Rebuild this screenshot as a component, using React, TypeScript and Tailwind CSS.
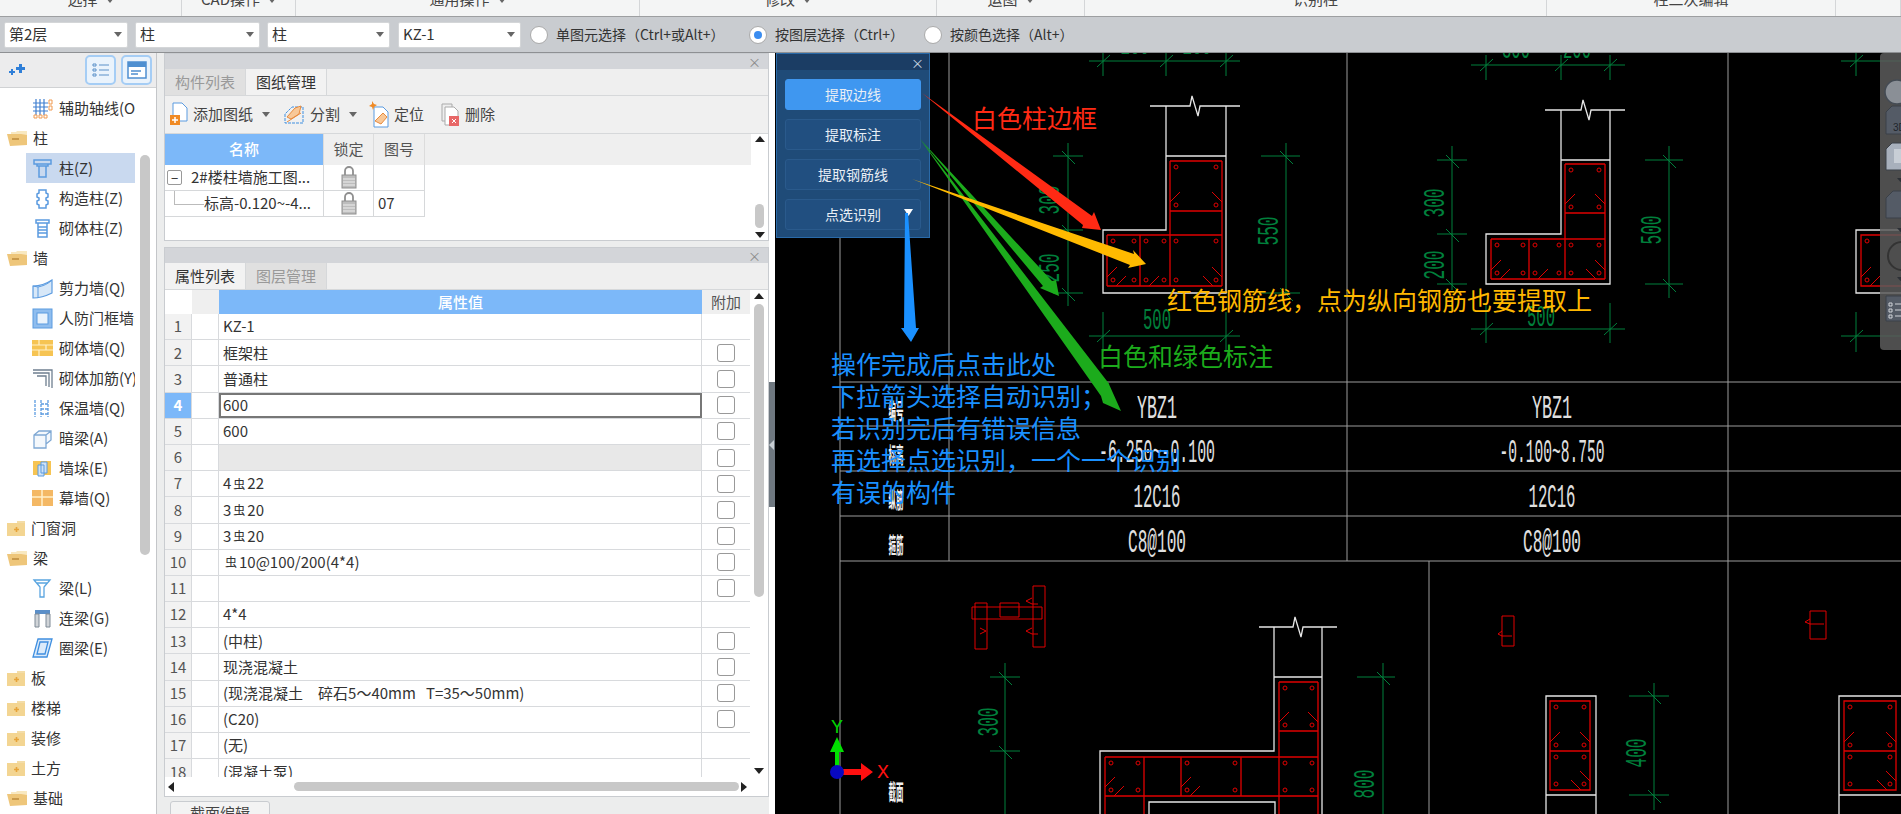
import type { ReactNode } from "react";

const RED = "#e00000";
const WHITE = "#e6e6e6";
const GREEN = "#00803c";
const GRID = "#9c9c9c";

function Caret({ className = "" }: { className?: string }) {
  return <span className={`inline-block w-0 h-0 border-x-[4px] border-x-transparent border-t-[5px] border-t-[#666] ${className}`} />;
}

/* top strips */
const ribbon = [
  { w: 182, label: "选择", caret: true },
  { w: 114, label: "CAD操作", caret: true },
  { w: 344, label: "通用操作", caret: true },
  { w: 297, label: "修改", caret: true },
  { w: 148, label: "运图", caret: true },
  { w: 462, label: "识别柱", caret: false },
  { w: 289, label: "柱二次编辑", caret: false },
  { w: 65, label: "", caret: false },
];

function Select({ value, w }: { value: string; w: string }) {
  return (
    <div className={`${w} h-[26px] bg-white border border-[#d4d6d8] rounded-[2px] flex items-center justify-between pl-[4px] pr-[5px] text-[15px] text-[#333]`}>
      <span>{value}</span>
      <Caret />
    </div>
  );
}

function Radio({ on, label, className }: { on?: boolean; label: string; className: string }) {
  return (
    <div className={`flex items-center ${className}`}>
      <span className="w-[18px] h-[18px] rounded-full bg-white border border-[#aaa] flex items-center justify-center shrink-0">
        {on && <span className="w-[8px] h-[8px] rounded-full bg-[#3b8df0]" />}
      </span>
      <span className="ml-[8px] text-[14px] text-[#333] whitespace-nowrap">{label}</span>
    </div>
  );
}

/* tree icons */
function TreeIcon({ name }: { name: string }) {
  const blue = "#5b9be0";
  const amber = "#f6c453";
  const orange = "#f0a030";
  const common = { width: 21, height: 21, viewBox: "0 0 21 21", fill: "none", className: "shrink-0" };
  switch (name) {
    case "grid":
      return (
        <svg {...common}>
          <path d="M1 5h15M1 9h15M1 13h15M4 1v16M8 1v16M12 1v16" stroke="#3f7fd0" strokeWidth="1.2" />
          <path d="M17 2h3v4h-3zM17 8h3v4h-3zM2 17h3v3H2zM7 17h3v3H7zM12 17h3v3h-3z" stroke="#f09a50" />
        </svg>
      );
    case "column":
      return (
        <svg {...common}>
          <path d="M2 2h17v4H2zM5 6h11v2H5zM7 8h7v11H7z" stroke={blue} strokeWidth="1.5" />
        </svg>
      );
    case "gz":
      return (
        <svg {...common}>
          <path d="M7 2h7v3l2 1v3l-2 1v2l2 1v3l-2 1v3H7v-3l-2-1v-3l2-1v-2L5 9V6l2-1z" stroke={blue} strokeWidth="1.5" />
        </svg>
      );
    case "brick":
      return (
        <svg {...common}>
          <path d="M4 2h13v3H4zM6 5h9v14H6zM6 9h9M6 12h9M6 15h9" stroke={blue} strokeWidth="1.5" />
        </svg>
      );
    case "shear":
      return (
        <svg {...common}>
          <path d="M1 8c6 0 13-2 19-6v13c-6 3-13 5-19 5z" fill="#d8e8f8" stroke={blue} strokeWidth="1.2" />
          <path d="M1 8l5 1v11M6 9c5-1 10-3 14-7" stroke={blue} />
        </svg>
      );
    case "door":
      return (
        <svg {...common}>
          <rect x="1" y="1" width="19" height="19" fill="#8fbdee" stroke={blue} />
          <rect x="5" y="5" width="11" height="11" fill="#eaf3fc" stroke={blue} />
        </svg>
      );
    case "wall":
      return (
        <svg {...common}>
          <rect x="0" y="2" width="21" height="16" fill={amber} />
          <path d="M0 7h21M0 12h21M7 2v5M14 7v5M7 12v6" stroke="#fff0c8" strokeWidth="1.2" />
        </svg>
      );
    case "rein":
      return (
        <svg {...common}>
          <path d="M1 2h19v18M1 5h16v14M5 8h9v10" stroke="#6f7f90" strokeWidth="1.3" />
        </svg>
      );
    case "insul":
      return (
        <svg {...common}>
          <path d="M3 2v17M9 2v17M16 2v17M9 6h7M9 11h7M9 16h7" stroke={blue} strokeWidth="1.3" strokeDasharray="3 1" />
        </svg>
      );
    case "hidden":
      return (
        <svg {...common}>
          <path d="M2 7l5-4h12v9l-5 4v4H2zM2 7h12v9M14 7l5-4" stroke="#7fa8d4" strokeWidth="1.3" fill="#f4f8fc" />
        </svg>
      );
    case "pier":
      return (
        <svg {...common}>
          <rect x="1" y="3" width="18" height="14" fill={amber} />
          <path d="M6 7h6v11H6zM9 4h6v11H9z" fill="#cfe2f6" stroke={blue} />
        </svg>
      );
    case "curtain":
      return (
        <svg {...common}>
          <rect x="0" y="2" width="21" height="16" fill={orange} opacity="0.75" />
          <path d="M0 9h21M10 2v16" stroke="#fff0c8" strokeWidth="1.5" />
        </svg>
      );
    case "beam":
      return (
        <svg {...common}>
          <path d="M2 2h16l-6 7v10H8V9zM8 9L2 2M12 9l6-7M5 5h10" stroke="#5aa5e0" strokeWidth="1.3" />
        </svg>
      );
    case "link":
      return (
        <svg {...common}>
          <path d="M3 2h15v4H3z" fill="#5b8fc8" />
          <path d="M3 6h4v13H3zM14 6h4v13h-4z" fill="#d0d4d8" stroke="#7f8a96" />
        </svg>
      );
    case "ring":
      return (
        <svg {...common}>
          <path d="M6 1h14l-5 18H1zM8 4h8l-3 12H5z" fill="#dcebfa" stroke="#3f8fe0" strokeWidth="1.3" />
        </svg>
      );
    default:
      return null;
  }
}

function Folder({ open }: { open?: boolean }) {
  if (open) {
    return (
      <svg width="21" height="17" viewBox="0 0 21 17" className="shrink-0">
        <path d="M4 2h5l1-1h10v12H4z" fill="#f8e8c0" />
        <path d="M0 4h14l6 1v10l-17 1z" fill="#eec67a" />
        <rect x="5" y="8" width="7" height="2" fill="#c99a4c" />
      </svg>
    );
  }
  return (
    <svg width="19" height="17" viewBox="0 0 19 17" className="shrink-0">
      <path d="M10 1h8v4h-8z" fill="#f3dca6" />
      <rect x="0" y="3" width="18" height="13" fill="#f3d592" />
      <path d="M7 9.500h5M9.500 7v5" stroke="#e6a33a" strokeWidth="1.600" />
    </svg>
  );
}

const tree: { label: string; icon?: string; folder?: "open" | "closed"; active?: boolean }[] = [
  { label: "辅助轴线(O", icon: "grid" },
  { label: "柱", folder: "open" },
  { label: "柱(Z)", icon: "column", active: true },
  { label: "构造柱(Z)", icon: "gz" },
  { label: "砌体柱(Z)", icon: "brick" },
  { label: "墙", folder: "open" },
  { label: "剪力墙(Q)", icon: "shear" },
  { label: "人防门框墙(", icon: "door" },
  { label: "砌体墙(Q)", icon: "wall" },
  { label: "砌体加筋(Y)", icon: "rein" },
  { label: "保温墙(Q)", icon: "insul" },
  { label: "暗梁(A)", icon: "hidden" },
  { label: "墙垛(E)", icon: "pier" },
  { label: "幕墙(Q)", icon: "curtain" },
  { label: "门窗洞", folder: "closed" },
  { label: "梁", folder: "open" },
  { label: "梁(L)", icon: "beam" },
  { label: "连梁(G)", icon: "link" },
  { label: "圈梁(E)", icon: "ring" },
  { label: "板", folder: "closed" },
  { label: "楼梯", folder: "closed" },
  { label: "装修", folder: "closed" },
  { label: "土方", folder: "closed" },
  { label: "基础", folder: "open" },
];

function LeftPanel() {
  return (
    <div className="w-[157px] shrink-0 bg-white border-r border-[#c4c6c9] flex flex-col">
      <div className="h-[35px] bg-[#ececed] border-b border-[#d0d2d4] flex items-center pl-[9px] pr-[4px]">
        <svg width="16" height="12" viewBox="0 0 16 12">
          <path d="M10 0h3v3h3v3h-3v3h-3V6H7V3h3zM2 5h2v2h2v2H4v2H2V9H0V7h2z" fill="#2f7fd8" />
        </svg>
        <button className="ml-auto w-[31px] h-[30px] rounded-[5px] border-2 border-[#a5cdf5] bg-[#eaf3fc] flex items-center justify-center">
          <svg width="18" height="16" viewBox="0 0 18 16" fill="none" stroke="#5a90c8">
            <path d="M1 2h3v2H1zM1 7h3v2H1zM1 12h3v2H1zM7 3h10M7 8h10M7 13h10" />
          </svg>
        </button>
        <button className="ml-[5px] w-[31px] h-[30px] rounded-[5px] border-2 border-[#a5cdf5] bg-[#eaf3fc] flex items-center justify-center">
          <svg width="20" height="18" viewBox="0 0 20 18">
            <rect x="1" y="1" width="18" height="16" fill="#fff" stroke="#4f8fd0" strokeWidth="1.500" />
            <rect x="1" y="1" width="18" height="5" fill="#4f8fd0" />
            <path d="M4 10h10M4 13h7" stroke="#4f8fd0" strokeWidth="1.300" />
          </svg>
        </button>
      </div>
      <div className="flex-1 flex overflow-hidden">
        <div className="w-[135px] shrink-0 pt-[5px]">
          {tree.map((row) =>
            row.folder ? (
              <div key={row.label} className="h-[30px] flex items-center pl-[7px] text-[15px] text-[#333]">
                <Folder open={row.folder === "open"} />
                <span className="ml-[5px] whitespace-nowrap">{row.label}</span>
              </div>
            ) : (
              <div
                key={row.label}
                className={`h-[30px] ml-[26px] flex items-center pl-[6px] text-[15px] text-[#333] overflow-hidden ${row.active ? "bg-[#c9d9ef]" : ""}`}
              >
                <TreeIcon name={row.icon ?? ""} />
                <span className="ml-[6px] whitespace-nowrap">{row.label}</span>
              </div>
            ),
          )}
        </div>
        <div className="ml-[5px] w-[10px] mt-[67px] h-[400px] bg-[#c8c8c8] rounded-full" />
      </div>
    </div>
  );
}

/* middle panels */
function PanelHead() {
  return (
    <div className="h-[15px] shrink-0 bg-[#d3d5d9] flex items-center justify-end pr-[7px] text-[13px] leading-none text-[#8a8a8a]">×</div>
  );
}

function Tabs({ items, active }: { items: string[]; active: number }) {
  return (
    <div className="h-[27px] shrink-0 bg-[#efefef] border-b border-[#d6d8da] flex">
      {items.map((t, i) => (
        <div
          key={t}
          className={`w-[81px] flex items-center justify-center text-[15px] border-r border-[#d6d8da] ${i === active ? "bg-[#f2f2f2] text-[#333]" : "bg-[#e0e0e0] text-[#999]"}`}
        >
          {t}
        </div>
      ))}
    </div>
  );
}

function Lock() {
  return (
    <svg width="16" height="23" viewBox="0 0 16 23">
      <path d="M4 9V5a4 4 0 0 1 8 0v4" fill="none" stroke="#8f8f8f" strokeWidth="1.800" />
      <rect x="1" y="9" width="14" height="13" fill="#bdbdbd" stroke="#8f8f8f" />
      <path d="M2 13h12M2 16h12M2 19h12" stroke="#eee" />
    </svg>
  );
}

function ToolIcon({ kind }: { kind: string }) {
  if (kind === "add")
    return (
      <svg width="18" height="25" viewBox="0 0 18 25">
        <path d="M3 1h9l5 5v13H3z" fill="#fff" stroke="#5b9be0" />
        <rect x="0" y="13" width="10" height="10" fill="#f08a24" />
        <path d="M2 18h6M5 15v6" stroke="#fff" strokeWidth="1.500" />
      </svg>
    );
  if (kind === "split")
    return (
      <svg width="22" height="25" viewBox="0 0 22 25" fill="none">
        <path d="M2 12v9h18V5H9z" stroke="#3f8fe0" strokeDasharray="3 1" />
        <path d="M4 15l8-9 6-2-2 8-8 5z" fill="#f8c898" stroke="#e88a3c" />
        <path d="M4 20l14-9" stroke="#e88a3c" />
      </svg>
    );
  if (kind === "locate")
    return (
      <svg width="20" height="27" viewBox="0 0 20 27" fill="none">
        <path d="M5 6h9l5 5v15H5z" fill="#fff" stroke="#5b9be0" />
        <path d="M3 0l2 3 3 1-3 2-1 3-1-3-3-1 3-2z" fill="#f08a24" />
        <path d="M6 20l8-8 4 4-6 7z" fill="#f8c898" stroke="#e88a3c" />
      </svg>
    );
  return (
    <svg width="19" height="24" viewBox="0 0 19 24" fill="none">
      <path d="M1 1h10v17H1z" fill="#eee" stroke="#aaa" />
      <path d="M4 4h9l4 4v14H4z" fill="#fff" stroke="#aaa" />
      <rect x="8" y="13" width="10" height="10" fill="#e86868" />
      <path d="M11 16l4 4M15 16l-4 4" stroke="#fff" />
    </svg>
  );
}

function Tool({ kind, label, caret, className }: { kind: string; label: string; caret?: boolean; className: string }) {
  return (
    <div className={`flex items-center text-[15px] text-[#444] ${className}`}>
      <ToolIcon kind={kind} />
      <span className="ml-[5px] whitespace-nowrap">{label}</span>
      {caret && <Caret className="ml-[9px]" />}
    </div>
  );
}

function Arrow({ dir }: { dir: "up" | "down" | "left" | "right" }) {
  const cls = {
    up: "border-x-[5px] border-x-transparent border-b-[6px] border-b-[#222]",
    down: "border-x-[5px] border-x-transparent border-t-[6px] border-t-[#222]",
    left: "border-y-[5px] border-y-transparent border-r-[6px] border-r-[#222]",
    right: "border-y-[5px] border-y-transparent border-l-[6px] border-l-[#222]",
  }[dir];
  return <span className={`block w-0 h-0 ${cls}`} />;
}

function DrawingPanel() {
  return (
    <div className="h-[188px] shrink-0 bg-white border border-[#c9ccd0] flex flex-col">
      <PanelHead />
      <Tabs items={["构件列表", "图纸管理"]} active={1} />
      <div className="h-[38px] shrink-0 bg-[#f0f0f0] border-b border-[#d6d8da] flex items-center pl-[5px]">
        <Tool kind="add" label="添加图纸" caret className="w-[113px]" />
        <Tool kind="split" label="分割" caret className="w-[86px]" />
        <Tool kind="locate" label="定位" className="w-[72px]" />
        <Tool kind="del" label="删除" className="" />
      </div>
      <div className="flex-1 flex min-h-0">
        <div className="flex-1 flex flex-col">
          <div className="h-[31px] bg-[#efefef] flex text-[15px] text-[#555] shrink-0">
            <div className="w-[158px] bg-[#7cb8f9] text-white font-medium flex items-center justify-center">名称</div>
            <div className="w-[51px] border-x border-[#dcdcdc] flex items-center justify-center">锁定</div>
            <div className="w-[51px] border-r border-[#dcdcdc] flex items-center justify-center">图号</div>
          </div>
          <div className="flex h-[26px] text-[15px] text-[#333]">
            <div className="w-[158px] border-b border-[#d6d8da] flex items-center pl-[2px] whitespace-nowrap overflow-hidden">
              <span className="w-[15px] h-[15px] border border-[#999] rounded-[2px] flex items-center justify-center leading-none text-[13px] shrink-0">−</span>
              <span className="ml-[9px]">2#楼柱墙施工图...</span>
            </div>
            <div className="w-[51px] border-x border-b border-[#d6d8da] flex items-center justify-center"><Lock /></div>
            <div className="w-[51px] border-r border-b border-[#d6d8da]" />
          </div>
          <div className="flex h-[26px] text-[15px] text-[#333]">
            <div className="w-[158px] border-b border-[#d6d8da] flex items-center pl-[9px] whitespace-nowrap overflow-hidden">
              <span className="w-[30px] h-[18px] -mt-[16px] border-l border-b border-[#bbb] shrink-0" />
              <span>标高-0.120~-4...</span>
            </div>
            <div className="w-[51px] border-x border-b border-[#d6d8da] flex items-center justify-center"><Lock /></div>
            <div className="w-[51px] border-r border-b border-[#d6d8da] flex items-center pl-[4px]">07</div>
          </div>
        </div>
        <div className="w-[17px] shrink-0 flex flex-col items-center justify-between py-[2px]">
          <Arrow dir="up" />
          <div className="flex-1" />
          <div className="w-[9px] h-[24px] bg-[#c8c8c8] rounded-full mb-[4px]" />
          <Arrow dir="down" />
        </div>
      </div>
    </div>
  );
}

function Rebar() {
  return <span className="text-[12px] align-[4px] mx-[2px]">虫</span>;
}

const props: { value?: ReactNode; check: boolean }[] = [
  { value: "KZ-1", check: false },
  { value: "框架柱", check: true },
  { value: "普通柱", check: true },
  { value: "600", check: true },
  { value: "600", check: true },
  { check: true },
  { value: <>4<Rebar />22</>, check: true },
  { value: <>3<Rebar />20</>, check: true },
  { value: <>3<Rebar />20</>, check: true },
  { value: <><Rebar />10@100/200(4*4)</>, check: true },
  { check: true },
  { value: "4*4", check: false },
  { value: "(中柱)", check: true },
  { value: "现浇混凝土", check: true },
  { value: "(现浇混凝土　碎石5～40mm   T=35～50mm)", check: true },
  { value: "(C20)", check: true },
  { value: "(无)", check: false },
  { value: "(混凝土泵)", check: false },
];

function PropertyPanel() {
  return (
    <div className="h-[550px] shrink-0 bg-white border border-[#c9ccd0] flex flex-col">
      <PanelHead />
      <Tabs items={["属性列表", "图层管理"]} active={0} />
      <div className="flex-1 flex min-h-0">
        <div className="flex-1 flex flex-col overflow-hidden text-[15px] text-[#333]">
          <div className="h-[24px] shrink-0 flex">
            <div className="w-[27px]" />
            <div className="w-[27px] bg-[#efefef]" />
            <div className="w-[483px] bg-[#7cb8f9] text-white font-medium flex items-center justify-center">属性值</div>
            <div className="flex-1 bg-[#efefef] text-[#555] flex items-center justify-center">附加</div>
          </div>
          {props.map((row, i) => {
            const num = i + 1;
            const selected = num === 4;
            return (
              <div key={num} className="h-[26.2px] shrink-0 flex border-b border-[#d8dadd]">
                <div className={`w-[27px] flex items-center justify-center border-r border-[#d8dadd] ${selected ? "bg-[#7cb8f9] text-white font-bold" : "bg-[#f2f2f2] text-[#555]"}`}>
                  {num}
                </div>
                <div className="w-[27px] border-r border-[#d8dadd]" />
                <div className={`w-[483px] flex items-center whitespace-pre ${selected ? "border-2 border-[#777] pl-[2px]" : "border-r border-[#d8dadd] pl-[4px]"} ${num === 6 ? "bg-[#e8e8e8]" : ""}`}>
                  {row.value}
                </div>
                <div className="flex-1 flex items-center justify-center">
                  {row.check && <span className="w-[18px] h-[18px] border border-[#999] rounded-[3px] bg-white" />}
                </div>
              </div>
            );
          })}
        </div>
        <div className="w-[18px] shrink-0 flex flex-col items-center py-[3px]">
          <Arrow dir="up" />
          <div className="w-[10px] h-[293px] mt-[5px] bg-[#c8c8c8] rounded-full" />
          <div className="flex-1" />
          <Arrow dir="down" />
        </div>
      </div>
      <div className="h-[19px] shrink-0 flex items-center px-[3px]">
        <Arrow dir="left" />
        <div className="ml-[120px] w-[445px] h-[9px] bg-[#c8c8c8] rounded-full" />
        <div className="flex-1" />
        <Arrow dir="right" />
        <div className="w-[18px]" />
      </div>
    </div>
  );
}

/* CAD drawing */
function DimV({ x, y1, y2, ticks, l = 15, r = 15 }: { x: number; y1: number; y2: number; ticks: number[]; l?: number; r?: number }) {
  return (
    <g stroke={GREEN}>
      <path d={`M${x} ${y1}V${y2}`} />
      {ticks.map((t) => (
        <path key={t} d={`M${x - l} ${t}H${x + r}M${x - 6} ${t - 5}L${x + 7} ${t + 8}`} />
      ))}
    </g>
  );
}

function DimH({ y, x1, x2, ticks, up = 10, down = 15 }: { y: number; x1: number; x2: number; ticks: number[]; up?: number; down?: number }) {
  return (
    <g stroke={GREEN}>
      <path d={`M${x1} ${y}H${x2}`} />
      {ticks.map((t) => (
        <path key={t} d={`M${t} ${y - up}V${y + down}M${t - 6} ${y + 6}L${t + 7} ${y - 6}`} />
      ))}
    </g>
  );
}

function Num({ x, y, t, len = 29, size = 30, rot = true }: { x: number; y: number; t: string; len?: number; size?: number; rot?: boolean }) {
  return (
    <text
      x={x}
      y={y}
      fill={GREEN}
      fontFamily="Liberation Mono, monospace"
      fontSize={size}
      textAnchor="middle"
      dominantBaseline="central"
      textLength={len}
      lengthAdjust="spacingAndGlyphs"
      transform={rot ? `rotate(-90 ${x} ${y})` : undefined}
    >
      {t}
    </text>
  );
}

function Cell({ t, x, y, len }: { t: string; x: number; y: number; len: number }) {
  return (
    <text
      x={x}
      y={y}
      fill="#e0e0e0"
      fontFamily="Liberation Mono, monospace"
      fontSize={33}
      textAnchor="middle"
      dominantBaseline="central"
      textLength={len}
      lengthAdjust="spacingAndGlyphs"
    >
      {t}
    </text>
  );
}

function Blob({ t, y }: { t: string; y: number }) {
  return (
    <text
      x={896}
      y={y}
      fill="#f0f0f0"
      fontFamily="Noto Sans CJK SC, sans-serif"
      fontWeight={700}
      fontSize={22}
      textAnchor="middle"
      dominantBaseline="central"
      textLength={15}
      lengthAdjust="spacingAndGlyphs"
    >
      {t}
    </text>
  );
}

/* hooks: a = left upper, b = left lower, c = right upper, d = right lower */
function Stirrup({ x1, y1, x2, y2, hooks = "" }: { x1: number; y1: number; x2: number; y2: number; hooks?: string }) {
  let d = "";
  if (hooks.includes("a")) d += `M${x1} ${y2 - 9}L${x1 + 10} ${y2 - 19}`;
  if (hooks.includes("b")) d += `M${x1 + 9} ${y2}L${x1 + 19} ${y2 - 10}`;
  if (hooks.includes("c")) d += `M${x2} ${y2 - 9}L${x2 - 10} ${y2 - 19}`;
  if (hooks.includes("d")) d += `M${x2 - 9} ${y2}L${x2 - 19} ${y2 - 10}`;
  return (
    <g stroke={RED} fill="none">
      <circle cx={x1 + 6} cy={y1 + 6} r={2} />
      <circle cx={x2 - 6} cy={y1 + 6} r={2} />
      <circle cx={x1 + 6} cy={y2 - 6} r={2} />
      <circle cx={x2 - 6} cy={y2 - 6} r={2} />
      {d && <path d={d} />}
    </g>
  );
}

function Zig({ x1, x2, y, z }: { x1: number; x2: number; y: number; z: number }) {
  return <path d={`M${x1} ${y}H${z}L${z + 2} ${y - 10}L${z + 8} ${y + 10}L${z + 10} ${y}H${x2}`} fill="none" stroke={WHITE} strokeWidth="1.300" />;
}

function Drawing() {
  return (
    <svg className="absolute inset-0" width="1126" height="761" viewBox="775 53 1126 761">
      {/* table lines */}
      <path d="M840 238V814M949 53V561M1347 53V561M1728 53V814M1429 561V814M840 382H1901M840 426H1901M840 471H1901M840 516H1901M840 561H1901" stroke={GRID} strokeWidth="1" fill="none" />
      <Blob t="编号" y={409} />
      <Blob t="标高" y={453} />
      <Blob t="纵筋" y={498} />
      <Blob t="箍筋" y={543} />
      <Blob t="截面" y={790} />
      <Cell t="YBZ1" x={1157} y={409} len={40} />
      <Cell t="-6.250~-0.100" x={1157} y={453} len={116} />
      <Cell t="12C16" x={1157} y={498} len={47} />
      <Cell t="C8@100" x={1157} y={543} len={58} />
      <Cell t="YBZ1" x={1552} y={409} len={40} />
      <Cell t="-0.100~8.750" x={1552} y={453} len={105} />
      <Cell t="12C16" x={1552} y={498} len={47} />
      <Cell t="C8@100" x={1552} y={543} len={58} />

      {/* first column */}
      <DimH y={61} x1={1089} x2={1240} ticks={[1103, 1166, 1226]} />
      <Num x={1135} y={46} t="250" rot={false} />
      <Num x={1197} y={46} t="250" rot={false} />
      <DimV x={1068} y1={143} y2={306} ticks={[156, 230, 293]} />
      <Num x={1051} y={200} t="300" />
      <Num x={1051} y={268} t="250" />
      <DimV x={1286} y1={143} y2={293} ticks={[156, 293]} l={25} r={14} />
      <Num x={1270} y={231} t="550" />
      <DimH y={336} x1={1089} x2={1240} ticks={[1103, 1226]} up={24} down={16} />
      <Num x={1157} y={321} t="500" len={28} rot={false} />
      <Zig x1={1150} x2={1240} y={106} z={1190} />
      <path d="M1166 106V230H1103V293H1226V106M1166 156H1226" fill="none" stroke={WHITE} strokeWidth="1.300" />
      <path d="M1170 161V286M1222 161V286M1170 161H1222M1170 211H1222M1107 235H1222M1107 286H1222M1107 235V286M1140 235V286" fill="none" stroke={RED} strokeWidth="1.300" />
      <Stirrup x1={1170} y1={161} x2={1222} y2={211} hooks="ac" />
      <Stirrup x1={1107} y1={235} x2={1140} y2={286} hooks="ab" />
      <Stirrup x1={1140} y1={235} x2={1170} y2={286} hooks="b" />
      <Stirrup x1={1170} y1={235} x2={1222} y2={286} hooks="cd" />

      {/* second column */}
      <DimH y={65} x1={1471} x2={1625} ticks={[1486, 1561, 1610]} />
      <Num x={1516} y={50} t="300" len={28} rot={false} />
      <Num x={1577} y={50} t="200" len={28} rot={false} />
      <DimV x={1452} y1={146} y2={290} ticks={[160, 234, 284]} />
      <Num x={1436} y={203} t="300" />
      <Num x={1436} y={265} t="200" />
      <DimV x={1669} y1={146} y2={298} ticks={[160, 284]} l={24} r={14} />
      <Num x={1653} y={230} t="500" />
      <DimH y={329} x1={1471} x2={1625} ticks={[1486, 1610]} up={26} down={14} />
      <Num x={1541} y={318} t="500" len={28} rot={false} />
      <Zig x1={1545} x2={1625} y={110} z={1581} />
      <path d="M1561 110V234H1486V284H1610V110M1561 160H1610" fill="none" stroke={WHITE} strokeWidth="1.300" />
      <path d="M1565 164V279M1605 164V279M1565 164H1605M1565 213H1605M1491 239H1605M1491 279H1605M1491 239V279M1529 239V279" fill="none" stroke={RED} strokeWidth="1.300" />
      <Stirrup x1={1565} y1={164} x2={1605} y2={213} hooks="ac" />
      <Stirrup x1={1491} y1={239} x2={1529} y2={279} hooks="ab" />
      <Stirrup x1={1529} y1={239} x2={1565} y2={279} hooks="b" />
      <Stirrup x1={1565} y1={239} x2={1605} y2={279} hooks="cd" />

      {/* cut off column on the right */}
      <DimH y={61} x1={1841} x2={1901} ticks={[1856]} />
      <DimH y={336} x1={1841} x2={1901} ticks={[1856]} up={24} down={16} />
      <path d="M1901 230H1856V293H1901" fill="none" stroke={WHITE} strokeWidth="1.300" />
      <path d="M1901 235H1861V286H1901" fill="none" stroke={RED} strokeWidth="1.300" />
      <Stirrup x1={1861} y1={235} x2={1920} y2={286} hooks="ab" />

      {/* small red details */}
      <path d="M1033 586h12v61h-12zM975 603h12v46h-12zM972 607h70v12h-70zM1000 603h19v14h-19zM1032 598l-6 3 6 3h6M1032 628l-6 3 6 3h6M980 628l6 3-6 3" fill="none" stroke={RED} />
      <path d="M1502 616h12v30h-12zM1502 631l-4 3 4 2h10M1810 611h16v28h-16zM1810 619l-5 3 5 2h14" fill="none" stroke={RED} />

      {/* lower left drawing */}
      <DimV x={1005} y1={663} y2={814} ticks={[677, 751]} />
      <Num x={990} y={722} t="300" />
      <Zig x1={1259} x2={1337} y={627} z={1293} />
      <path d="M1274 627V751H1100V814M1322 627V814M1274 677H1322M1149 814V802H1275V814" fill="none" stroke={WHITE} strokeWidth="1.300" />
      <path d="M1279 682V814M1318 682V814M1279 682H1318M1279 731H1318M1105 757H1318M1105 796H1318M1105 757V814M1144 757V814M1181 757V796M1241 757V796" fill="none" stroke={RED} strokeWidth="1.300" />
      <Stirrup x1={1279} y1={682} x2={1318} y2={731} hooks="ac" />
      <Stirrup x1={1105} y1={757} x2={1144} y2={796} hooks="ab" />
      <Stirrup x1={1181} y1={757} x2={1241} y2={796} hooks="ab" />
      <Stirrup x1={1279} y1={757} x2={1318} y2={796} />
      <DimV x={1383} y1={663} y2={814} ticks={[677]} l={26} r={12} />
      <Num x={1366} y={784} t="800" />

      {/* narrow columns */}
      <path d="M1546 814V696H1596V814M1546 795H1596" fill="none" stroke={WHITE} strokeWidth="1.300" />
      <path d="M1550 701h40v89h-40zM1550 751h40" fill="none" stroke={RED} strokeWidth="1.300" />
      <Stirrup x1={1550} y1={701} x2={1590} y2={751} hooks="ac" />
      <Stirrup x1={1550} y1={751} x2={1590} y2={790} hooks="cd" />
      <DimV x={1654} y1={683} y2={810} ticks={[696, 795]} l={25} r={15} />
      <Num x={1638} y={753} t="400" />
      <path d="M1901 696H1839V814M1839 795H1901" fill="none" stroke={WHITE} strokeWidth="1.300" />
      <path d="M1844 701h52v89h-52zM1844 751h52" fill="none" stroke={RED} strokeWidth="1.300" />
      <Stirrup x1={1844} y1={701} x2={1896} y2={751} hooks="ac" />
      <Stirrup x1={1844} y1={751} x2={1896} y2={790} hooks="cd" />

      {/* axis */}
      <path d="M835 772V752h-5l7-15 7 15h-5v20z" fill="#00e000" />
      <path d="M837 769h24v-6l12 9-12 9v-6h-24z" fill="#ff1010" />
      <circle cx={837} cy={772} r={7} fill="#0808c0" />
      <text x={837} y={727} fill="#00d000" fontFamily="Liberation Mono, monospace" fontSize={20} textAnchor="middle" dominantBaseline="central">Y</text>
      <text x={883} y={772} fill="#ff1010" fontFamily="Liberation Mono, monospace" fontSize={20} textAnchor="middle" dominantBaseline="central">X</text>
    </svg>
  );
}

function Palette() {
  return (
    <div className="absolute right-0 top-0 w-[21px] h-[297px] bg-[#5c5c5c]/85 rounded-l-[4px] overflow-hidden">
      <svg width="21" height="297" viewBox="1880 53 21 297" fill="none">
        <circle cx="1897" cy="92" r="12" fill="#8a8f96" stroke="#444b54" strokeWidth="1.500" />
        <path d="M1886 112l6-6h12v28h-18z" fill="#545b66" stroke="#3a4048" />
        <text x="1893" y="131" fill="#20252c" fontSize="10" fontFamily="Liberation Sans, sans-serif">3D</text>
        <path d="M1886 149l6-6h12v27h-18z" fill="#a8b0bc" stroke="#3a4048" />
        <path d="M1894 149h10v14h-10z" fill="#c8ced6" />
        <path d="M1897 178h7l-3.500 4z" fill="#2c3036" />
        <path d="M1886 198l7-7h11v27h-18z" fill="#545b66" stroke="#3a4048" />
        <path d="M1897 228h7l-3.500 4z" fill="#2c3036" />
        <circle cx="1902" cy="256" r="14" stroke="#333" strokeWidth="2" />
        <path d="M1897 277h7l-3.500 4z" fill="#2c3036" />
        <path d="M1886 296h18v25h-18z" fill="#545b66" stroke="#3a4048" />
        <path d="M1889 303h3v3h-3zM1889 309h3v3h-3zM1889 315h3v3h-3zM1895 304h9M1895 310h9M1895 316h9" stroke="#d0d4d8" />
      </svg>
    </div>
  );
}

const actions = ["提取边线", "提取标注", "提取钢筋线", "点选识别"];

function ExtractDialog() {
  return (
    <div className="absolute left-[1px] top-0 w-[154px] h-[185px] bg-[#1f4b78] border border-[#2a6aa8] flex flex-col">
      <div className="h-[16px] bg-[#1b3d64] flex items-center justify-end pr-[5px] text-[13px] leading-none text-[#c8d4e0]">×</div>
      <div className="flex-1 flex flex-col gap-[9px] pt-[9px] px-[8px]">
        {actions.map((a, i) => (
          <button
            key={a}
            className={`h-[31px] rounded-[3px] text-[14px] text-[#e8eef5] flex items-center justify-center border ${i === 0 ? "bg-[#3f97f0] border-[#3f97f0]" : "bg-[#214f80] border-[#2a5a8c]"}`}
          >
            {a}
          </button>
        ))}
      </div>
    </div>
  );
}

function Annotations() {
  return (
    <>
      <svg className="absolute inset-0 pointer-events-none" width="1126" height="761" viewBox="775 53 1126 761">
        <path d="M904 209h9l-4.500 7z" fill="#fff" />
        {/* red */}
        <polygon points="922,93 1092,216 1094,212 1101,230 1082,228 1083,225" fill="#ff2a14" />
        {/* green, short */}
        <polygon points="920,139 1052,281 1056,280 1059,296 1040,288 1043,286" fill="#1cab1c" />
        {/* green, long */}
        <polygon points="920,139 1110,385 1108,382 1121,411 1103,403 1101,396" fill="#1cab1c" />
        {/* amber */}
        <polygon points="912,179 1134,254 1133,250 1146,264 1128,268 1130,265" fill="#ffba00" />
        {/* blue */}
        <polygon points="905,213 908,213 916,328 919,328 911,342 901,328 904,328" fill="#1a90ff" />
      </svg>
      <div className="absolute left-[197px] top-[48px] text-[25px] leading-[32px] text-[#ff2a14] whitespace-nowrap">白色柱边框</div>
      <div className="absolute left-[392px] top-[230px] text-[25px] leading-[32px] text-[#ffb800] whitespace-nowrap">红色钢筋线，点为纵向钢筋也要提取上</div>
      <div className="absolute left-[323px] top-[286px] text-[25px] leading-[32px] text-[#1cab1c] whitespace-nowrap">白色和绿色标注</div>
      <div className="absolute left-[56px] top-[294px] text-[25px] leading-[32px] text-[#1a90ff] whitespace-nowrap">
        <div>操作完成后点击此处</div>
        <div>下拉箭头选择自动识别；</div>
        <div>若识别完后有错误信息</div>
        <div>再选择点选识别，一个一个识别</div>
        <div>有误的构件</div>
      </div>
    </>
  );
}

export default function App() {
  return (
    <div className="w-[1901px] h-[814px] overflow-hidden flex flex-col bg-[#eceded] font-['Noto_Sans_CJK_SC','Noto_Sans',sans-serif]">
      <div className="h-[17px] shrink-0 bg-[#f4f5f5] border-b border-[#9d9fa1] flex overflow-hidden">
        {ribbon.map((r) => (
          <div
            key={r.label || "end"}
            style={{ width: r.w }}
            className="shrink-0 h-[16px] border-r border-[#d4d6d8] flex items-end justify-center gap-[8px] text-[15px] leading-[20px] text-[#444]"
          >
            <span className="whitespace-nowrap pb-[7px]">{r.label}</span>
            {r.caret && <Caret className="mb-[13px]" />}
          </div>
        ))}
      </div>
      <div className="h-[36px] shrink-0 bg-[#c9ccd0] border-b border-[#8e9093] flex items-center pl-[4px]">
        <Select value="第2层" w="w-[124px]" />
        <Select value="柱" w="w-[125px] ml-[7px]" />
        <Select value="柱" w="w-[123px] ml-[7px]" />
        <Select value="KZ-1" w="w-[123px] ml-[8px]" />
        <Radio label="单图元选择（Ctrl+或Alt+）" className="ml-[9px] w-[219px]" />
        <Radio on label="按图层选择（Ctrl+）" className="w-[175px]" />
        <Radio label="按颜色选择（Alt+）" className="" />
      </div>
      <div className="flex-1 flex min-h-0">
        <LeftPanel />
        <div className="ml-[7px] w-[605px] shrink-0 flex flex-col">
          <DrawingPanel />
          <div className="h-[6px] shrink-0" />
          <PropertyPanel />
          <div className="pl-[6px] pt-[4px]">
            <div className="w-[100px] h-[24px] bg-[#f3f3f3] border border-[#c9ccd0] rounded-t-[3px] flex justify-center text-[15px] text-[#444]">截面编辑</div>
          </div>
        </div>
        <div className="w-[6px] shrink-0 flex flex-col bg-white">
          <div className="mt-[329px] h-[125px] bg-[#6f7880] flex items-center">
            <span className="block w-0 h-0 border-y-[5px] border-y-transparent border-r-[5px] border-r-[#c8ced4]" />
          </div>
        </div>
        <div className="relative flex-1 bg-black overflow-hidden">
          <Drawing />
          <Palette />
          <ExtractDialog />
          <Annotations />
        </div>
      </div>
    </div>
  );
}
